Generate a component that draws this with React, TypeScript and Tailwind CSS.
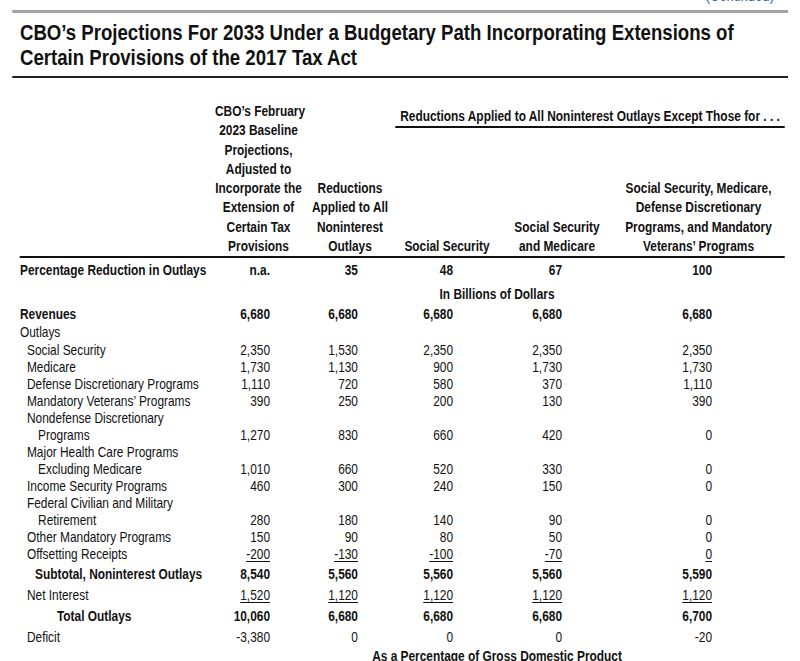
import React from "react";

const pads = ["pr-[39px]", "pr-[48.8px]", "pr-[52.4px]", "pr-[68.3px]", "pr-[89px]"];

type RowProps = {
  label?: string;
  ind?: string;
  bold?: boolean;
  vals?: string[];
  u?: boolean;
  h?: string;
  cls?: string;
};

function Row({ label = "", ind = "pl-0", bold = false, vals = [], u = false, h = "leading-[17px]", cls = "" }: RowProps) {
  const b = bold ? "font-bold" : "font-normal";
  return (
    <>
      <div className={`${ind} ${h} ${b} ${cls} whitespace-nowrap`}>{label}</div>
      {[0, 1, 2, 3, 4].map((i) => (
        <div key={i} className={`${pads[i]} ${h} ${b} ${cls} text-right whitespace-nowrap`}>
          {vals[i] !== undefined ? (
            <span className={u ? "underline underline-offset-[2px] decoration-1" : ""}>{vals[i]}</span>
          ) : null}
        </div>
      ))}
    </>
  );
}

const COLS = "grid-cols-[237.8px_106.1px_117.1px_119.5px_148.8px_203.7px]";

export default function App() {
  return (
    <div className="w-[800px] h-[661px] overflow-hidden bg-white">
      <div className="w-[975.6px] origin-top-left scale-x-[0.82] text-[#111] font-['Liberation_Sans',Arial,sans-serif]">
        <div className="h-[4px] overflow-hidden flex justify-end pr-[31.7px]">
          <span className="text-[#2a62b5] text-[16px] leading-[16px] -mt-[12px]">(Continued)</span>
        </div>
        <div className="mx-[14.6px] mt-[6px] h-[3px] bg-[#a3a3a3]" />
        <h1 className="mx-[24.4px] mt-[7px] text-[22.7px] leading-[25px] font-bold text-[#111] whitespace-nowrap">
          CBO’s Projections For 2033 Under a Budgetary Path Incorporating Extensions of
          <br />
          Certain Provisions of the 2017 Tax Act
        </h1>
        <div className="mx-[14.6px] mt-[6px] h-[2px] bg-[#222]" />

        <div className={`ml-[24.4px] mt-[24px] w-[933px] grid ${COLS} grid-rows-[auto_auto] border-b-2 border-[#111] text-[14.5px] leading-[19.3px] font-bold`}>
          <div className="col-start-1 row-start-1 row-span-2" />
          <div className="col-start-2 row-start-1 row-span-2 self-end text-center whitespace-nowrap">
            CBO’s February
            <br />
            2023 Baseline
            <br />
            Projections,
            <br />
            Adjusted to
            <br />
            Incorporate the
            <br />
            Extension of
            <br />
            Certain Tax
            <br />
            Provisions
          </div>
          <div className="col-start-3 row-start-1 row-span-2 self-end text-center whitespace-nowrap">
            Reductions
            <br />
            Applied to All
            <br />
            Noninterest
            <br />
            Outlays
          </div>
          <div className="col-start-4 col-span-3 row-start-1 self-start mt-[5px] -ml-[3.7px] border-b-2 border-[#111] text-center whitespace-nowrap">
            Reductions Applied to All Noninterest Outlays Except Those for . . .
          </div>
          <div className="col-start-4 row-start-2 self-end text-center whitespace-nowrap">Social Security</div>
          <div className="col-start-5 row-start-2 self-end text-center whitespace-nowrap">
            Social Security
            <br />
            and Medicare
          </div>
          <div className="col-start-6 row-start-2 self-end text-center pr-[7.3px] whitespace-nowrap">
            Social Security, Medicare,
            <br />
            Defense Discretionary
            <br />
            Programs, and Mandatory
            <br />
            Veterans’ Programs
          </div>
        </div>

        <div className={`ml-[24.4px] w-[933px] grid ${COLS} text-[14.5px]`}>
          <Row label="Percentage Reduction in Outlays" bold vals={["n.a.", "35", "48", "67", "100"]} cls="mt-[4px]" />
          <div className="col-span-6 mt-[7px] pl-[237.8px] pr-[7.3px] leading-[17px] font-bold text-center">In Billions of Dollars</div>
          <Row label="Revenues" bold vals={["6,680", "6,680", "6,680", "6,680", "6,680"]} h="leading-[18px]" cls="mt-[2px]" />
          <Row label="Outlays" h="leading-[19px]" />
          <Row label="Social Security" ind="pl-[8.5px]" vals={["2,350", "1,530", "2,350", "2,350", "2,350"]} />
          <Row label="Medicare" ind="pl-[8.5px]" vals={["1,730", "1,130", "900", "1,730", "1,730"]} />
          <Row label="Defense Discretionary Programs" ind="pl-[8.5px]" vals={["1,110", "720", "580", "370", "1,110"]} />
          <Row label="Mandatory Veterans’ Programs" ind="pl-[8.5px]" vals={["390", "250", "200", "130", "390"]} />
          <Row label="Nondefense Discretionary" ind="pl-[8.5px]" />
          <Row label="Programs" ind="pl-[22px]" vals={["1,270", "830", "660", "420", "0"]} />
          <Row label="Major Health Care Programs" ind="pl-[8.5px]" />
          <Row label="Excluding Medicare" ind="pl-[22px]" vals={["1,010", "660", "520", "330", "0"]} />
          <Row label="Income Security Programs" ind="pl-[8.5px]" vals={["460", "300", "240", "150", "0"]} />
          <Row label="Federal Civilian and Military" ind="pl-[8.5px]" />
          <Row label="Retirement" ind="pl-[22px]" vals={["280", "180", "140", "90", "0"]} />
          <Row label="Other Mandatory Programs" ind="pl-[8.5px]" vals={["150", "90", "80", "50", "0"]} />
          <Row label="Offsetting Receipts" ind="pl-[8.5px]" u vals={["-200", "-130", "-100", "-70", "0"]} />
          <Row label="Subtotal, Noninterest Outlays" ind="pl-[18.3px]" bold h="leading-[21px]" cls="mt-[1px]" vals={["8,540", "5,560", "5,560", "5,560", "5,590"]} />
          <Row label="Net Interest" ind="pl-[8.5px]" u h="leading-[21px]" vals={["1,520", "1,120", "1,120", "1,120", "1,120"]} />
          <Row label="Total Outlays" ind="pl-[45.1px]" bold h="leading-[21px]" vals={["10,060", "6,680", "6,680", "6,680", "6,700"]} />
          <Row label="Deficit" ind="pl-[8.5px]" h="leading-[21px]" vals={["-3,380", "0", "0", "0", "-20"]} />
          <div className="col-span-6 pl-[237.8px] pr-[7.3px] leading-[17px] font-bold text-center">As a Percentage of Gross Domestic Product</div>
        </div>
      </div>
    </div>
  );
}
